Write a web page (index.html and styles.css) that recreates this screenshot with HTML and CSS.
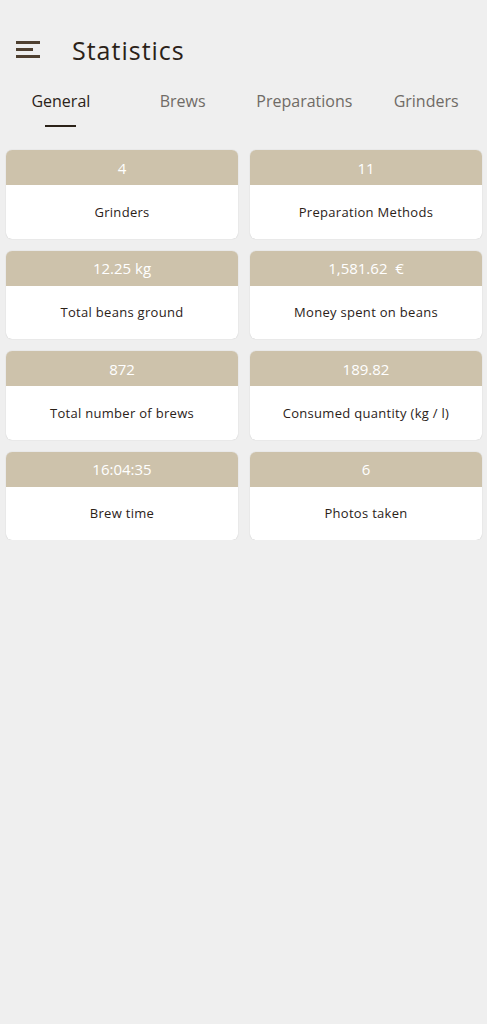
FILE: index.html
```html
<!DOCTYPE html>
<html>
<head>
<meta charset="utf-8">
<link rel="stylesheet" href="styles.css">
</head>
<body>
<header class="toolbar">
  <svg class="menu" width="26" height="20" viewBox="0 0 26 20">
    <rect x="0" y="1" width="24" height="3" fill="#4f4030"/>
    <rect x="0" y="8" width="17" height="3" fill="#4f4030"/>
    <rect x="0" y="15" width="24" height="3" fill="#4f4030"/>
  </svg>
  <h1 class="title">Statistics</h1>
</header>
<nav class="tabs">
  <div class="tab active"><span>General</span></div>
  <div class="tab"><span>Brews</span></div>
  <div class="tab"><span>Preparations</span></div>
  <div class="tab"><span>Grinders</span></div>
</nav>
<main class="grid">
  <div class="card"><div class="value">4</div><div class="label">Grinders</div></div>
  <div class="card"><div class="value">11</div><div class="label">Preparation Methods</div></div>
  <div class="card"><div class="value">12.25 kg</div><div class="label">Total beans ground</div></div>
  <div class="card"><div class="value">1,581.62&nbsp; €</div><div class="label">Money spent on beans</div></div>
  <div class="card"><div class="value">872</div><div class="label">Total number of brews</div></div>
  <div class="card"><div class="value">189.82</div><div class="label">Consumed quantity (kg / l)</div></div>
  <div class="card"><div class="value">16:04:35</div><div class="label">Brew time</div></div>
  <div class="card"><div class="value">6</div><div class="label">Photos taken</div></div>
</main>
</body>
</html>
```
FILE: styles.css
```css
html, body {
  margin: 0;
  padding: 0;
  background: #efefef;
  font-family: "Open Sans", "DejaVu Sans", sans-serif;
}
.toolbar {
  display: flex;
  align-items: center;
  height: 56px;
  padding: 22px 0 0 16px;
}
.menu {
  display: block;
}
.title {
  margin: 0 0 0 30px;
  font-weight: 400;
  font-size: 25px;
  color: #2b2218;
  letter-spacing: 1px;
}
.tabs {
  display: flex;
  height: 51px;
}
.tab {
  flex: 1;
  display: flex;
  justify-content: center;
  padding-top: 12px;
  font-size: 16px;
  color: #6f6b66;
}
.tab span {
  height: 26px;
}
.tab.active {
  color: #2b2218;
}
.tab.active span {
  position: relative;
}
.tab.active span::after {
  content: "";
  position: absolute;
  left: 50%;
  width: 31px;
  margin-left: -16px;
  bottom: -11px;
  height: 2px;
  background: #2b2218;
}
.grid {
  display: grid;
  grid-template-columns: 232px 232px;
  column-gap: 12px;
  row-gap: 12px;
  padding: 21px 0 0 6px;
}
.card {
  background: #fff;
  border-radius: 6px;
  overflow: hidden;
  height: 88.5px;
  box-shadow: 0 0 1px rgba(0,0,0,0.25);
  display: flex;
  flex-direction: column;
}
.value {
  height: 35px;
  background: #cdc2ab;
  color: #fff;
  font-size: 15px;
  display: flex;
  align-items: center;
  justify-content: center;
}
.label {
  flex: 1;
  display: flex;
  align-items: center;
  justify-content: center;
  font-size: 13px;
  color: #2b2218;
  letter-spacing: 0.3px;
}
```
